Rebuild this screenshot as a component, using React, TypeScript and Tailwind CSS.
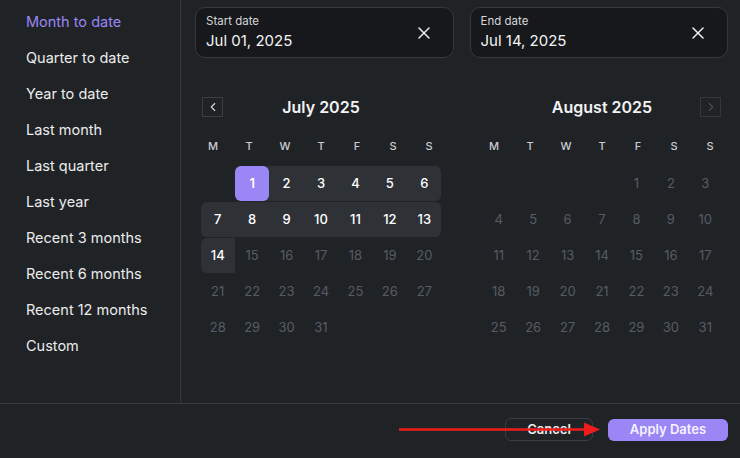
import { X, ChevronLeft, ChevronRight } from 'lucide-react'

const presets = [
  'Month to date',
  'Quarter to date',
  'Year to date',
  'Last month',
  'Last quarter',
  'Last year',
  'Recent 3 months',
  'Recent 6 months',
  'Recent 12 months',
  'Custom',
]

const dayNames = ['M', 'T', 'W', 'T', 'F', 'S', 'S']

// builds weeks (Monday first) for a month
function buildWeeks(offset: number, days: number) {
  const cells: (number | null)[] = []
  for (let i = 0; i < offset; i++) cells.push(null)
  for (let d = 1; d <= days; d++) cells.push(d)
  while (cells.length % 7 !== 0) cells.push(null)
  const weeks: (number | null)[][] = []
  for (let i = 0; i < cells.length; i += 7) weeks.push(cells.slice(i, i + 7))
  return weeks
}

interface MonthProps {
  title: string
  offset: number
  days: number
  rangeStart?: number
  rangeEnd?: number
  nav: 'prev' | 'next'
}

function Month({ title, offset, days, rangeStart, rangeEnd, nav }: MonthProps) {
  const weeks = buildWeeks(offset, days)
  const inRange = (d: number | null) =>
    d !== null && rangeStart !== undefined && rangeEnd !== undefined && d >= rangeStart && d <= rangeEnd

  return (
    <div className="w-[252px]">
      {/* Header */}
      <div className="flex items-center px-[7px] h-5">
        {nav === 'prev' ? (
          <button className="w-[21px] h-5 border border-[#3a3d42] flex items-center justify-center text-[#d0d2d6]">
            <ChevronLeft size={14} strokeWidth={2} />
          </button>
        ) : (
          <div className="w-[21px]" />
        )}
        <div className="flex-1 text-center text-[16px] font-semibold text-[#f2f2f3]">{title}</div>
        {nav === 'next' ? (
          <button className="w-[21px] h-5 border border-[#33363b] flex items-center justify-center text-[#4a4e55]">
            <ChevronRight size={14} strokeWidth={2} />
          </button>
        ) : (
          <div className="w-[21px]" />
        )}
      </div>

      {/* Day names */}
      <div className="grid grid-cols-7 mt-[21px] h-4 items-center">
        {dayNames.map((n, i) => (
          <div key={i} className="text-center text-[11px] font-medium text-[#c9ccd1]">
            {n}
          </div>
        ))}
      </div>

      {/* Dates */}
      <div className="w-[241px] mx-auto mt-3 flex flex-col gap-[1.5px]">
        {weeks.map((week, wi) => (
          <div key={wi} className="grid grid-cols-7 h-[34.5px]">
            {week.map((d, di) => {
              const active = inRange(d)
              const prevActive = di > 0 && inRange(week[di - 1])
              const nextActive = di < 6 && inRange(week[di + 1])
              const isStart = d === rangeStart && active
              const isEnd = d === rangeEnd && active
              let cls = 'flex items-center justify-center text-[13px] '
              if (active) {
                cls += 'bg-[#2e3136] text-white font-medium '
                if (!prevActive) cls += 'rounded-l-md '
                if (!nextActive && !isEnd) cls += 'rounded-r-md '
              } else {
                cls += 'text-[#565c64] '
              }
              return (
                <div key={di} className={cls}>
                  {isStart ? (
                    <div className="w-full h-full rounded-md bg-[#9b86f6] flex items-center justify-center text-white font-semibold">
                      {d}
                    </div>
                  ) : (
                    d
                  )}
                </div>
              )
            })}
          </div>
        ))}
      </div>
    </div>
  )
}

function DateField({ label, value }: { label: string; value: string }) {
  return (
    <div className="h-[51px] rounded-[10px] border border-[#35383d] bg-[#17181b] flex items-center pl-[10px] pr-[19px]">
      <div className="flex-1 flex flex-col">
        <span className="text-[11.5px] leading-[14px] text-[#d4d5d8]">{label}</span>
        <span className="text-[15px] leading-5 mt-[3px] text-[#f3f3f4]">{value}</span>
      </div>
      <X size={20} strokeWidth={1.8} className="text-[#f0f0f0]" />
    </div>
  )
}

export default function App() {
  return (
    <div
      className="relative w-full h-[458px] bg-[#202326] flex flex-col overflow-hidden"
      style={{ fontFamily: 'Inter, "Noto Sans", sans-serif' }}
    >
      <div className="flex h-[404px] border-b border-[#393c41]">
        {/* Sidebar */}
        <div className="w-[181px] border-r border-[#34373c] pt-1">
          {presets.map((p, i) => (
            <div
              key={p}
              className={
                'h-9 flex items-center pl-[26px] text-[14.5px] leading-none ' +
                (i === 0 ? 'text-[#9b86f6]' : 'text-[#ececed]')
              }
            >
              {p}
            </div>
          ))}
        </div>

        {/* Main */}
        <div className="flex-1 pl-[14px] pr-[12px] pt-[7px]">
          <div className="grid grid-cols-2 gap-4">
            <DateField label="Start date" value="Jul 01, 2025" />
            <DateField label="End date" value="Jul 14, 2025" />
          </div>

          <div className="flex justify-between mt-[39px]">
            <Month title="July 2025" offset={1} days={31} rangeStart={1} rangeEnd={14} nav="prev" />
            <Month title="August 2025" offset={4} days={31} nav="next" />
          </div>
        </div>
      </div>

      {/* Footer */}
      <div className="flex-1 flex items-center justify-end gap-[15px] pr-3 pb-[3px]">
        <button className="w-[88px] h-[23px] rounded-md border border-[#3a3d42] text-[13px] font-semibold text-[#ededee]">
          Cancel
        </button>
        <button className="w-[120px] h-[22px] rounded-md bg-[#9b86f6] text-[13px] font-semibold text-[#f5f3ff]">
          Apply Dates
        </button>
      </div>

      {/* Annotation arrow */}
      <svg className="absolute left-[396px] top-[420px]" width="210" height="20" viewBox="0 0 210 20">
        <line x1="3" y1="9.5" x2="192" y2="9.5" stroke="#f01c1c" strokeWidth="2.5" />
        <polygon points="188,2.5 204,9.5 188,16.5" fill="#f01c1c" />
      </svg>
    </div>
  )
}
